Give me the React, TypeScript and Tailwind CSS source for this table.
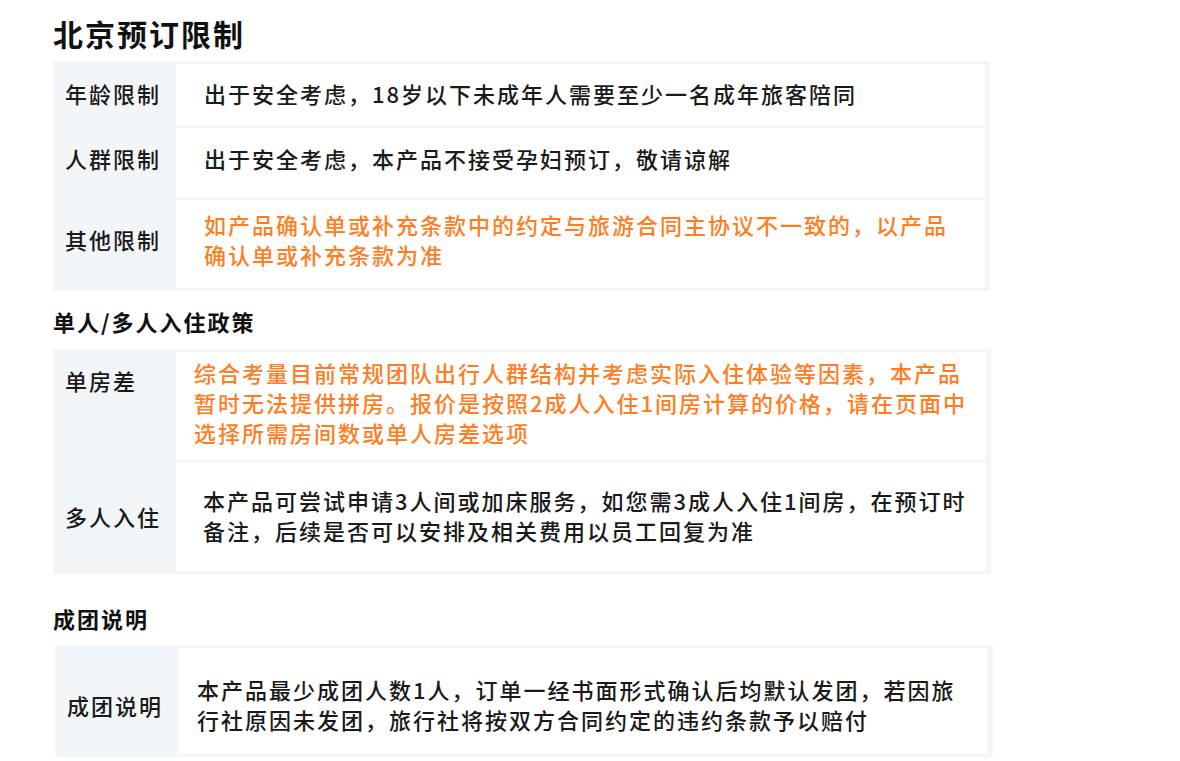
import React from "react";

type Row = {
  label: string;
  text: string;
  orange?: boolean;
  h: string; // row height
  textPad: string; // cell padding classes
  labelPad: string;
};

const font = { fontFamily: '"Noto Sans CJK SC", "Noto Sans", sans-serif' };

function Table({ rows, className }: { rows: Row[]; className: string }) {
  return (
    <div className={`flex flex-col gap-[3px] bg-[#f3f6f9] pt-[3px] pb-[3px] ${className}`}>
      {rows.map((r) => (
        <div key={r.label} className={`flex ${r.h}`}>
          <div className={`w-[123px] shrink-0 pl-[12px] text-[22px] leading-[30px] font-medium tracking-[2px] text-[#1a1a1a] ${r.labelPad}`}>
            {r.label}
          </div>
          <div
            className={`flex-1 bg-white text-[22px] leading-[30px] font-medium tracking-[2px] ${r.textPad} ${
              r.orange ? "text-[#ff7d1f]" : "text-[#1a1a1a]"
            }`}
          >
            {r.text}
          </div>
        </div>
      ))}
    </div>
  );
}

export default function App() {
  const limits: Row[] = [
    {
      label: "年龄限制",
      text: "出于安全考虑，18岁以下未成年人需要至少一名成年旅客陪同",
      h: "h-[61px]",
      textPad: "pt-[14px] pl-[28px] pr-[30px]",
      labelPad: "pt-[14px]",
    },
    {
      label: "人群限制",
      text: "出于安全考虑，本产品不接受孕妇预订，敬请谅解",
      h: "h-[69px]",
      textPad: "pt-[15px] pl-[28px] pr-[30px]",
      labelPad: "pt-[15px]",
    },
    {
      label: "其他限制",
      text: "如产品确认单或补充条款中的约定与旅游合同主协议不一致的，以产品确认单或补充条款为准",
      orange: true,
      h: "h-[88px]",
      textPad: "pt-[9px] pl-[28px] pr-[30px]",
      labelPad: "pt-[24px]",
    },
  ];

  const stay: Row[] = [
    {
      label: "单房差",
      text: "综合考量目前常规团队出行人群结构并考虑实际入住体验等因素，本产品暂时无法提供拼房。报价是按照2成人入住1间房计算的价格，请在页面中选择所需房间数或单人房差选项",
      orange: true,
      h: "h-[108px]",
      textPad: "pt-[5px] pl-[18px] pr-[12px]",
      labelPad: "pt-[13px]",
    },
    {
      label: "多人入住",
      text: "本产品可尝试申请3人间或加床服务，如您需3成人入住1间房，在预订时备注，后续是否可以安排及相关费用以员工回复为准",
      h: "h-[108px]",
      textPad: "pt-[22px] pl-[27px] pr-[10px]",
      labelPad: "pt-[38px]",
    },
  ];

  const group: Row[] = [
    {
      label: "成团说明",
      text: "本产品最少成团人数1人，订单一经书面形式确认后均默认发团，若因旅行社原因未发团，旅行社将按双方合同约定的违约条款予以赔付",
      h: "h-[106px]",
      textPad: "pt-[26px] pl-[19px] pr-[20px]",
      labelPad: "pt-[42px]",
    },
  ];

  return (
    <div className="min-h-[761px] w-[1180px] bg-white" style={font}>
      <div className="pt-[15px] pl-[53px]">
        <h1 className="text-[30px] leading-[36px] font-bold tracking-[2px] text-[#111]">北京预订限制</h1>

        <Table rows={limits} className="mt-[10px] w-[937px] pr-[5px]" />

        <h2 className="mt-[15px] text-[22px] leading-[30px] font-bold tracking-[2px] text-[#111]">
          单人/多人入住政策
        </h2>

        <Table rows={stay} className="mt-[13px] w-[938px] pr-[5px]" />

        <h2 className="mt-[29px] text-[22px] leading-[30px] font-bold tracking-[2px] text-[#111]">
          成团说明
        </h2>

        <Table rows={group} className="mt-[12px] ml-[2px] w-[938px] pr-[6px]" />
      </div>
    </div>
  );
}
